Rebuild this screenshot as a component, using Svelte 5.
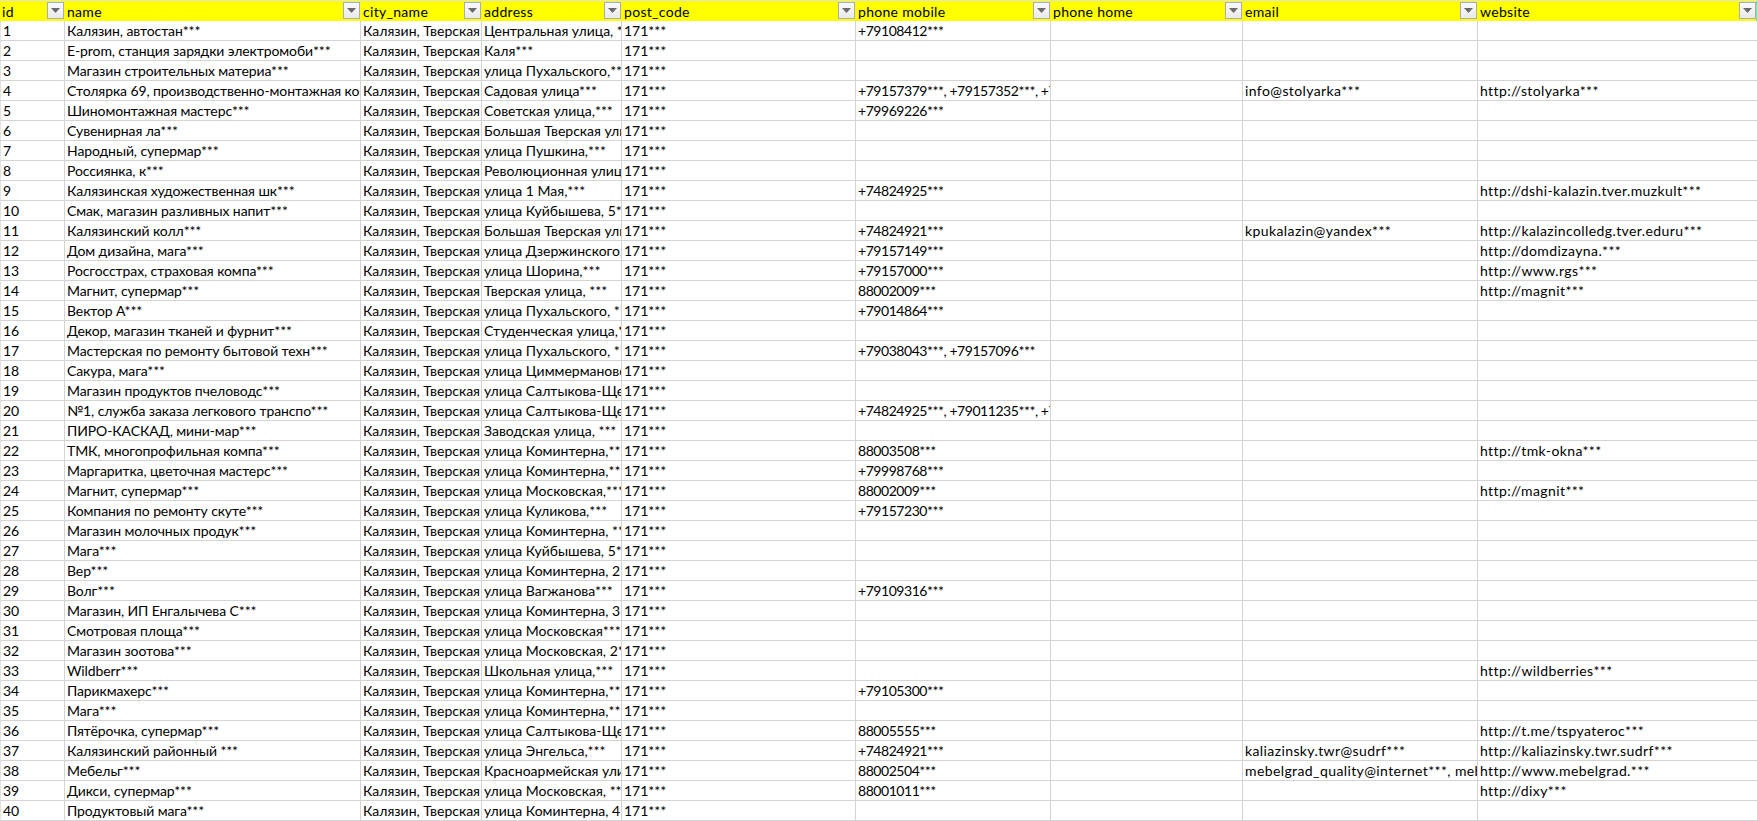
<script>
  const headers = ["id", "name", "city_name", "address", "post_code", "phone mobile", "phone home", "email", "website"];
  const city = "Калязин, Тверская область";
  const zip = "171***";

  // name, address, mobile, email, website
  const data = [
    ["Калязин, автостан***", "Центральная улица, ***", "+79108412***"],
    ["E-prom, станция зарядки электромоби***", "Каля***"],
    ["Магазин строительных материа***", "улица Пухальского,***"],
    ["Столярка 69, производственно-монтажная компания***", "Садовая улица***", "+79157379***, +79157352***, +79157000***", "info@stolyarka***", "http://stolyarka***"],
    ["Шиномонтажная мастерс***", "Советская улица,***", "+79969226***"],
    ["Сувенирная ла***", "Большая Тверская улица,***"],
    ["Народный, супермар***", "улица Пушкина,***"],
    ["Россиянка, к***", "Революционная улица,***"],
    ["Калязинская художественная шк***", "улица 1 Мая,***", "+74824925***", "", "http://dshi-kalazin.tver.muzkult***"],
    ["Смак, магазин разливных напит***", "улица Куйбышева, 5***"],
    ["Калязинский колл***", "Большая Тверская улица,***", "+74824921***", "kpukalazin@yandex***", "http://kalazincolledg.tver.eduru***"],
    ["Дом дизайна, мага***", "улица Дзержинского,***", "+79157149***", "", "http://domdizayna.***"],
    ["Росгосстрах, страховая компа***", "улица Шорина,***", "+79157000***", "", "http://www.rgs***"],
    ["Магнит, супермар***", "Тверская улица, ***", "88002009***", "", "http://magnit***"],
    ["Вектор А***", "улица Пухальского, ***", "+79014864***"],
    ["Декор, магазин тканей и фурнит***", "Студенческая улица,***"],
    ["Мастерская по ремонту бытовой техн***", "улица Пухальского, ***", "+79038043***, +79157096***"],
    ["Сакура, мага***", "улица Циммермановская,***"],
    ["Магазин продуктов пчеловодс***", "улица Салтыкова-Щедрина,***"],
    ["№1, служба заказа легкового транспо***", "улица Салтыкова-Щедрина,***", "+74824925***, +79011235***, +79157000***"],
    ["ПИРО-КАСКАД, мини-мар***", "Заводская улица, ***"],
    ["ТМК, многопрофильная компа***", "улица Коминтерна,***", "88003508***", "", "http://tmk-okna***"],
    ["Маргаритка, цветочная мастерс***", "улица Коминтерна,***", "+79998768***"],
    ["Магнит, супермар***", "улица Московская,***", "88002009***", "", "http://magnit***"],
    ["Компания по ремонту скуте***", "улица Куликова,***", "+79157230***"],
    ["Магазин молочных продук***", "улица Коминтерна, ***"],
    ["Мага***", "улица Куйбышева, 5***"],
    ["Вер***", "улица Коминтерна, 2***"],
    ["Волг***", "улица Вагжанова***", "+79109316***"],
    ["Магазин, ИП Енгалычева С***", "улица Коминтерна, 3***"],
    ["Смотровая площа***", "улица Московская***"],
    ["Магазин зоотова***", "улица Московская, 2***"],
    ["Wildberr***", "Школьная улица,***", "", "", "http://wildberries***"],
    ["Парикмахерс***", "улица Коминтерна,***", "+79105300***"],
    ["Мага***", "улица Коминтерна,***"],
    ["Пятёрочка, супермар***", "улица Салтыкова-Щедрина,***", "88005555***", "", "http://t.me/tspyateroc***"],
    ["Калязинский районный ***", "улица Энгельса,***", "+74824921***", "kaliazinsky.twr@sudrf***", "http://kaliazinsky.twr.sudrf***"],
    ["Мебельг***", "Красноармейская улица,***", "88002504***", "mebelgrad_quality@internet***, mebelgrad@internet***", "http://www.mebelgrad.***"],
    ["Дикси, супермар***", "улица Московская, ***", "88001011***", "", "http://dixy***"],
    ["Продуктовый мага***", "улица Коминтерна, 4***"],
  ];
</script>

<table class="sheet">
  <colgroup>
    {#each headers as _, i}
      <col class="c{i}" />
    {/each}
  </colgroup>
  <thead>
    <tr>
      {#each headers as h}
        <th>
          {h}
          <span class="filter">
            <svg width="9" height="5" viewBox="0 0 9 5"><polygon points="0,0 9,0 4.5,5" fill="#6b6b6b" /></svg>
          </span>
        </th>
      {/each}
    </tr>
  </thead>
  <tbody>
    {#each data as [name, address, mobile, email, website], i}
      <tr>
        <td>{i + 1}</td>
        <td class="name">{name}</td>
        <td>{city}</td>
        <td>{address}</td>
        <td>{zip}</td>
        <td class="phone">{mobile ?? ""}</td>
        <td></td>
        <td class="latin">{email ?? ""}</td>
        <td class="latin">{website ?? ""}</td>
      </tr>
    {/each}
  </tbody>
</table>

<style>
  :global(body) {
    background: #fff;
    overflow: hidden;
  }
  .sheet {
    table-layout: fixed;
    width: 1757px;
    border-collapse: separate;
    border-spacing: 0;
    border-top: 1px solid #e2e2e2;
    font-family: Lato, "Open Sans", sans-serif;
    font-size: 14px;
    color: #000;
  }
  .c0 { width: 65px; }
  .c1 { width: 296px; }
  .c2 { width: 121px; }
  .c3 { width: 140px; }
  .c4 { width: 234px; }
  .c5 { width: 195px; }
  .c6 { width: 192px; }
  .c7 { width: 235px; }
  .c8 { width: 279px; }

  th, td {
    box-sizing: border-box;
    height: 20px;
    padding: 0 0 0 2px;
    overflow: hidden;
    white-space: nowrap;
    text-align: left;
    font-weight: 400;
    line-height: 19px;
  }
  th {
    position: relative;
    background: #ffff00;
    vertical-align: middle;
    letter-spacing: 0.3px;
  }
  th:last-child { box-shadow: inset -1px 0 0 #7fe0a0; }
  td {
    border-right: 1px solid #d4d4d4;
    border-bottom: 1px solid #d4d4d4;
    vertical-align: bottom;
  }
  td:first-child { border-left: 1px solid #e2e2e2; padding-left: 2px; }
  td:last-child { border-right: 0; }
  .name { letter-spacing: -0.1px; }
  .phone { letter-spacing: -0.45px; }
  .latin { letter-spacing: 0.4px; }

  .filter {
    position: absolute;
    top: 1px;
    right: 1px;
    box-sizing: border-box;
    width: 17px;
    height: 17px;
    display: flex;
    align-items: center;
    justify-content: center;
    border: 1px solid #a9adb8;
    background: linear-gradient(#fbfbfb, #e9e9ec);
  }
</style>
